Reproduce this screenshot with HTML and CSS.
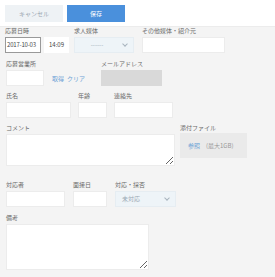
FILE: index.html
```html
<!DOCTYPE html>
<html lang="ja">
<head>
    <meta charset="UTF-8">
    <title>応募登録</title>
    <link rel="stylesheet" href="styles.css">
</head>
<body>
    <div class="header">
        <button class="btn cancel">キャンセル</button>
        <button class="btn save">保存</button>
    </div>
    <div class="form">
        <div class="row r1">
            <div class="field">
                <label>応募日時</label>
                <div class="inline">
                    <div class="input date w36">2017-10-03</div>
                    <div class="input time w25">14:09</div>
                </div>
            </div>
            <div class="field">
                <label>求人媒体</label>
                <div class="input select w60"><span>------</span><i class="chev"></i></div>
            </div>
            <div class="field">
                <label>その他媒体・紹介元</label>
                <div class="input w83"></div>
            </div>
        </div>

        <div class="row r2">
            <div class="field">
                <label>応募営業所</label>
                <div class="inline">
                    <div class="input w38"></div>
                    <a class="link get">取得</a>
                    <a class="link">クリア</a>
                </div>
            </div>
            <div class="field">
                <label>メールアドレス</label>
                <div class="input disabled w61"></div>
            </div>
        </div>

        <div class="row r3">
            <div class="field">
                <label>氏名</label>
                <div class="input w65"></div>
            </div>
            <div class="field">
                <label>年齢</label>
                <div class="input w29"></div>
            </div>
            <div class="field">
                <label>連絡先</label>
                <div class="input w59"></div>
            </div>
        </div>

        <div class="row r4">
            <div class="field">
                <label>コメント</label>
                <textarea class="area comment"></textarea>
            </div>
            <div class="field">
                <label>添付ファイル</label>
                <div class="filebox">
                    <a class="link">参照</a>
                    <span class="note">(最大1GB)</span>
                </div>
            </div>
        </div>

        <div class="row r5">
            <div class="field">
                <label>対応者</label>
                <div class="input w59"></div>
            </div>
            <div class="field">
                <label>面接日</label>
                <div class="input w34"></div>
            </div>
            <div class="field">
                <label>対応・採否</label>
                <div class="input select w61"><span>未対応</span><i class="chev"></i></div>
            </div>
        </div>

        <div class="row r6">
            <div class="field">
                <label>備考</label>
                <textarea class="area memo"></textarea>
            </div>
        </div>
    </div>
</body>
</html>
```

FILE: styles.css
```css
body {
    margin: 0;
    background-color: #f4f4f4;
    font-family: "Noto Sans CJK JP", "Noto Sans", sans-serif;
    font-size: 6px;
    color: #555;
}
.header {
    display: flex;
    gap: 4px;
    height: 27px;
    padding: 5px 5px;
    box-sizing: border-box;
    background-color: #fff;
    border-bottom: 1px solid #ececec;
}
.btn {
    width: 58px;
    height: 17px;
    border: none;
    padding: 0;
    font-family: inherit;
    font-size: 6px;
}
.btn.cancel {
    background-color: #eef2f5;
    color: #9aa6b0;
}
.btn.save {
    background-color: #4a90dc;
    color: #fff;
}
.form {
    padding: 0 6px;
}
.row {
    display: flex;
}
.r1 { gap: 5px; margin-left: -1px; }
.r2 { gap: 8px; margin-top: 7px; }
.r3 { gap: 7px; margin-top: 6px; }
.r4 { gap: 5px; margin-top: 6px; }
.r5 { gap: 8px; margin-top: 15px; }
.r6 { margin-top: 7px; }
.r1 .field:last-child { margin-left: 3px; }
.r2 .field:last-child { margin-left: 8px; }
.field label {
    display: block;
    height: 8px;
    line-height: 8px;
    margin-bottom: 2px;
    color: #6a6a6a;
    white-space: nowrap;
}
.inline {
    display: flex;
    align-items: center;
    gap: 3px;
    white-space: nowrap;
}
.input {
    height: 16px;
    box-sizing: border-box;
    background-color: #fff;
    border: 1px solid #ececec;
    line-height: 14px;
    padding: 0 3px;
    color: #444;
    white-space: nowrap;
    overflow: hidden;
}
.input.date {
    border-color: #999;
    padding: 0 1px;
    letter-spacing: -0.2px;
}
.input.time {
    border-color: #fff;
    text-align: center;
    padding: 0;
}
.input.select {
    display: flex;
    justify-content: space-between;
    align-items: center;
    background-color: #eef4f8;
    border-color: #e6edf2;
    color: #9aa8b4;
    padding: 0 6px;
}
.input.select span {
    flex: 1;
    text-align: center;
    padding-right: 10px;
}
.chev {
    width: 3px;
    height: 3px;
    border-right: 1px solid #a8b4be;
    border-bottom: 1px solid #a8b4be;
    transform: rotate(45deg);
    margin-top: -2px;
}
.r5 .select span {
    flex: none;
}
.input.disabled {
    background-color: #d9d9d9;
    border-color: #d9d9d9;
}
.w25 { width: 25px; }
.w29 { width: 29px; }
.w34 { width: 34px; }
.w36 { width: 36px; }
.w38 { width: 38px; }
.w59 { width: 59px; }
.w60 { width: 60px; }
.w61 { width: 61px; }
.w65 { width: 65px; }
.w83 { width: 83px; }
.link {
    color: #6fa3d6;
    white-space: nowrap;
}
.link.get {
    margin-left: 5px;
}
.area {
    display: block;
    box-sizing: border-box;
    background-color: #fff;
    border: 1px solid #ececec;
    margin: 0;
    padding: 2px;
    font-family: inherit;
    font-size: 6px;
}
.area.comment {
    width: 169px;
    height: 32px;
}
.area.memo {
    width: 143px;
    height: 46px;
}
.filebox {
    width: 67px;
    height: 25px;
    box-sizing: border-box;
    background-color: #eaeaea;
    display: flex;
    align-items: center;
    gap: 6px;
    padding: 0 8px;
    margin-top: -1px;
    white-space: nowrap;
}
.note {
    color: #999;
}
```
